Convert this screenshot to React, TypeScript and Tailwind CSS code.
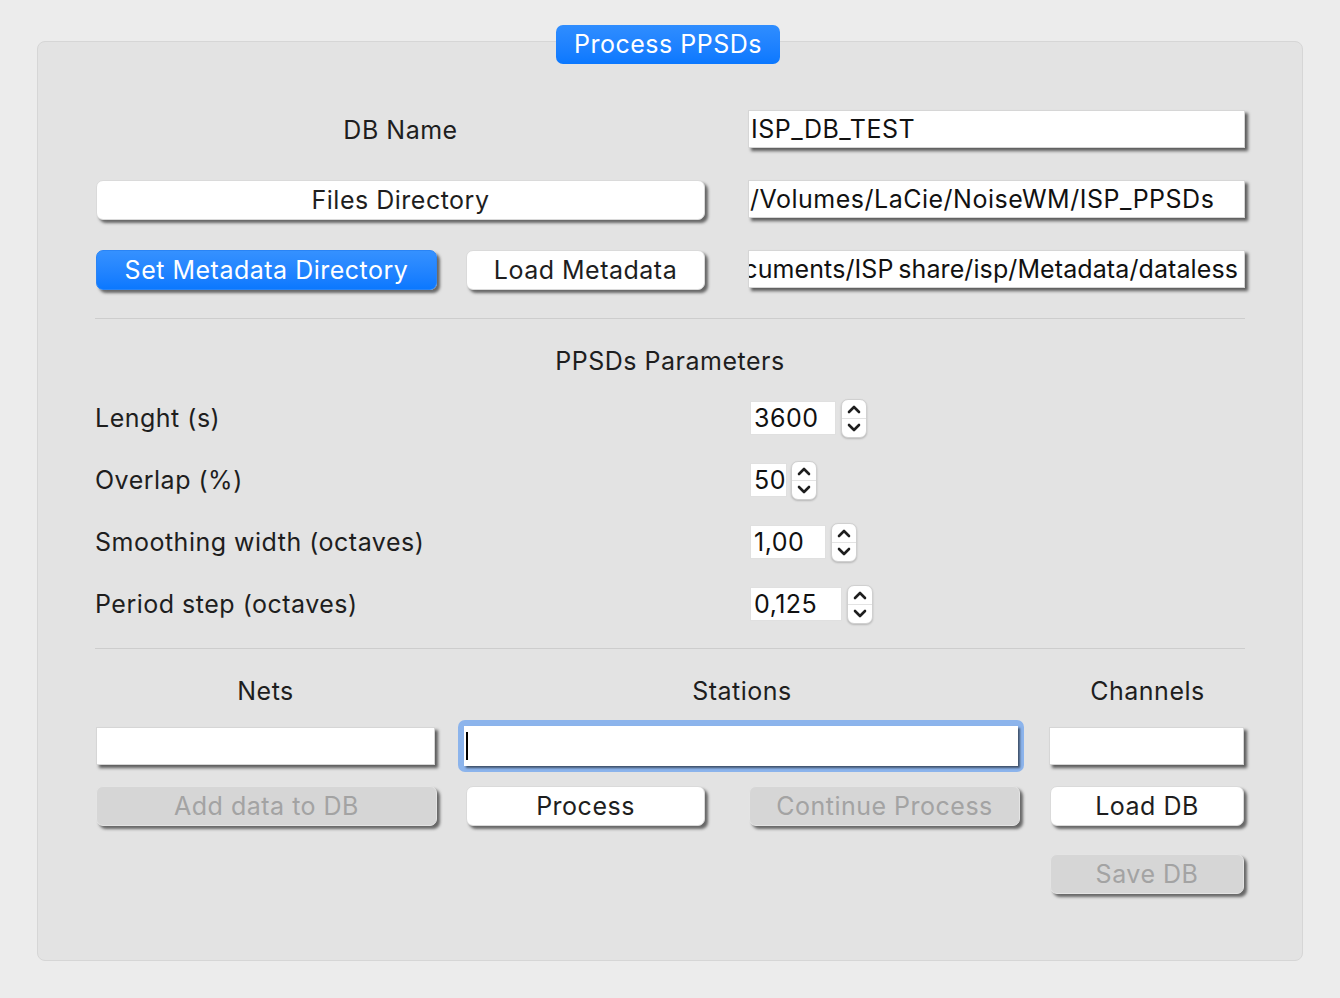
import React from "react";

const inputCls =
  "flex h-[38px] items-center overflow-hidden whitespace-nowrap border border-[#d6d6d6] bg-white text-[25px] tracking-[0.5px] leading-none text-[#111] shadow-[3px_3px_3px_rgba(0,0,0,0.6)]";

function Btn({
  children,
  className = "",
  variant = "white",
}: {
  children: React.ReactNode;
  className?: string;
  variant?: "white" | "blue" | "disabled";
}) {
  const v =
    variant === "blue"
      ? "bg-gradient-to-b from-[#3591ff] to-[#0a78ff] text-white border-[#2a84f5]"
      : variant === "disabled"
      ? "bg-[#d6d6d6] text-[#a3a3a3] border-[#e4e4e4]"
      : "bg-white text-[#1e1e1e] border-[#dadada]";
  return (
    <div
      className={`flex h-10 shrink-0 items-center justify-center rounded-[7px] border text-[25px] tracking-[0.5px] leading-none shadow-[3px_3px_3px_rgba(0,0,0,0.55)] ${v} ${className}`}
    >
      {children}
    </div>
  );
}

function Chevron({ up }: { up?: boolean }) {
  return (
    <svg width="16" height="11" viewBox="0 0 16 11">
      <path
        d={up ? "M3 8 L8 3 L13 8" : "M3 3 L8 8 L13 3"}
        fill="none"
        stroke="#1e1e1e"
        strokeWidth="2.6"
        strokeLinecap="round"
        strokeLinejoin="round"
      />
    </svg>
  );
}

function Spin({ value, w, gap }: { value: string; w: string; gap: string }) {
  return (
    <div className="ml-[2px] flex items-center">
      <div
        className={`flex h-[34px] items-center border border-[#e0e0e0] bg-white pl-[3px] text-[25px] tracking-[0.5px] leading-none text-[#111] ${w}`}
      >
        {value}
      </div>
      <div
        className={`flex h-[39px] w-[26px] flex-col overflow-hidden rounded-[7px] border border-[#d0d0d0] bg-white shadow-[0_1px_2px_rgba(0,0,0,0.2)] ${gap}`}
      >
        <div className="flex flex-1 items-center justify-center border-b border-[#e3e3e3] pt-px">
          <Chevron up />
        </div>
        <div className="flex flex-1 items-center justify-center pb-px">
          <Chevron />
        </div>
      </div>
    </div>
  );
}

function ParamRow({ label, children }: { label: string; children: React.ReactNode }) {
  return (
    <div className="grid h-10 grid-cols-[611px_497px] items-center gap-x-[42px]">
      <div className="text-[25px] tracking-[0.5px] leading-none text-[#1e1e1e]">{label}</div>
      {children}
    </div>
  );
}

export default function App() {
  return (
    <div className="h-[998px] w-[1340px] bg-[#ececec] px-[37px] pt-[41px] font-['Inter',sans-serif] text-[#1e1e1e]">
      <div className="relative h-[920px] rounded-[8px] border border-[#d6d6d6] bg-[#e3e3e3] px-[57px] pt-[68px]">
        <div className="absolute left-[518px] top-[-17px] flex h-[39px] w-[224px] items-center justify-center rounded-[7px] bg-gradient-to-b from-[#2f8dff] to-[#0a78ff] text-[25px] tracking-[0.5px] leading-none text-white">
          Process PPSDs
        </div>

        {/* Top section */}
        <div className="flex flex-col gap-y-[30px]">
          <div className="grid h-10 grid-cols-[611px_497px] items-start gap-x-[42px]">
            <div className="flex h-10 items-center justify-center text-[25px] tracking-[0.5px] leading-none">
              DB Name
            </div>
            <div className={`${inputCls} pl-[2px]`}>ISP_DB_TEST</div>
          </div>
          <div className="grid h-10 grid-cols-[611px_497px] items-start gap-x-[42px]">
            <Btn className="ml-px w-[609px]">Files Directory</Btn>
            <div className={`${inputCls} pl-[1px]`}>/Volumes/LaCie/NoiseWM/ISP_PPSDs</div>
          </div>
          <div className="grid h-10 grid-cols-[611px_497px] items-start gap-x-[42px]">
            <div className="flex">
              <Btn variant="blue" className="ml-px w-[341px]">
                Set Metadata Directory
              </Btn>
              <Btn className="ml-[29px] w-[239px]">Load Metadata</Btn>
            </div>
            <div className={`${inputCls} justify-end pr-[6px]`}>
              <span className="shrink-0 tracking-[0.1px]">cuments/ISP{"\u2009"}share/isp/Metadata/dataless</span>
            </div>
          </div>
        </div>

        <div className="mt-[28px] h-px bg-[#cdcdcd]" />

        <div className="mt-[27px] flex h-[30px] items-center justify-center text-[25px] tracking-[0.5px] leading-none">
          PPSDs Parameters
        </div>

        <div className="mt-[22px] flex flex-col gap-y-[22px]">
          <ParamRow label="Lenght (s)">
            <Spin value="3600" w="w-[86px]" gap="ml-[5px]" />
          </ParamRow>
          <ParamRow label="Overlap (%)">
            <Spin value="50" w="w-[37px]" gap="ml-[4px]" />
          </ParamRow>
          <ParamRow label="Smoothing width (octaves)">
            <Spin value="1,00" w="w-[76px]" gap="ml-[5px]" />
          </ParamRow>
          <ParamRow label="Period step (octaves)">
            <Spin value="0,125" w="w-[92px]" gap="ml-[5px]" />
          </ParamRow>
        </div>

        <div className="mt-[24px] h-px bg-[#cdcdcd]" />

        {/* Bottom section */}
        <div className="mt-[27px] flex h-[30px] items-center text-[25px] tracking-[0.5px] leading-none">
          <div className="flex w-[341px] justify-center">Nets</div>
          <div className="ml-[23px] flex w-[566px] justify-center">Stations</div>
          <div className="ml-[25px] flex w-[195px] justify-center">Channels</div>
        </div>

        <div className="mt-[14px] flex h-[52px] items-center">
          <div className={`${inputCls} ml-px w-[339px]`} />
          <div className="ml-[23px] flex h-[52px] w-[566px] items-center justify-center rounded-[7px] bg-[#8cb4ec] p-[6px]">
            <div className="flex h-full w-full items-center bg-white pl-[2px] shadow-[2px_2px_2px_rgba(0,0,0,0.55)]">
              <div className="h-[28px] w-[2px] bg-black" />
            </div>
          </div>
          <div className={`${inputCls} ml-[25px] w-[195px]`} />
        </div>

        <div className="mt-[14px] flex">
          <Btn variant="disabled" className="ml-px w-[341px]">
            Add data to DB
          </Btn>
          <Btn className="ml-[29px] w-[239px]">Process</Btn>
          <Btn variant="disabled" className="ml-[44px] w-[271px]">
            Continue Process
          </Btn>
          <Btn className="ml-[30px] w-[194px]">Load DB</Btn>
        </div>

        <div className="mt-[28px] flex justify-end">
          <Btn variant="disabled" className="mr-px w-[194px]">
            Save DB
          </Btn>
        </div>
      </div>
    </div>
  );
}
